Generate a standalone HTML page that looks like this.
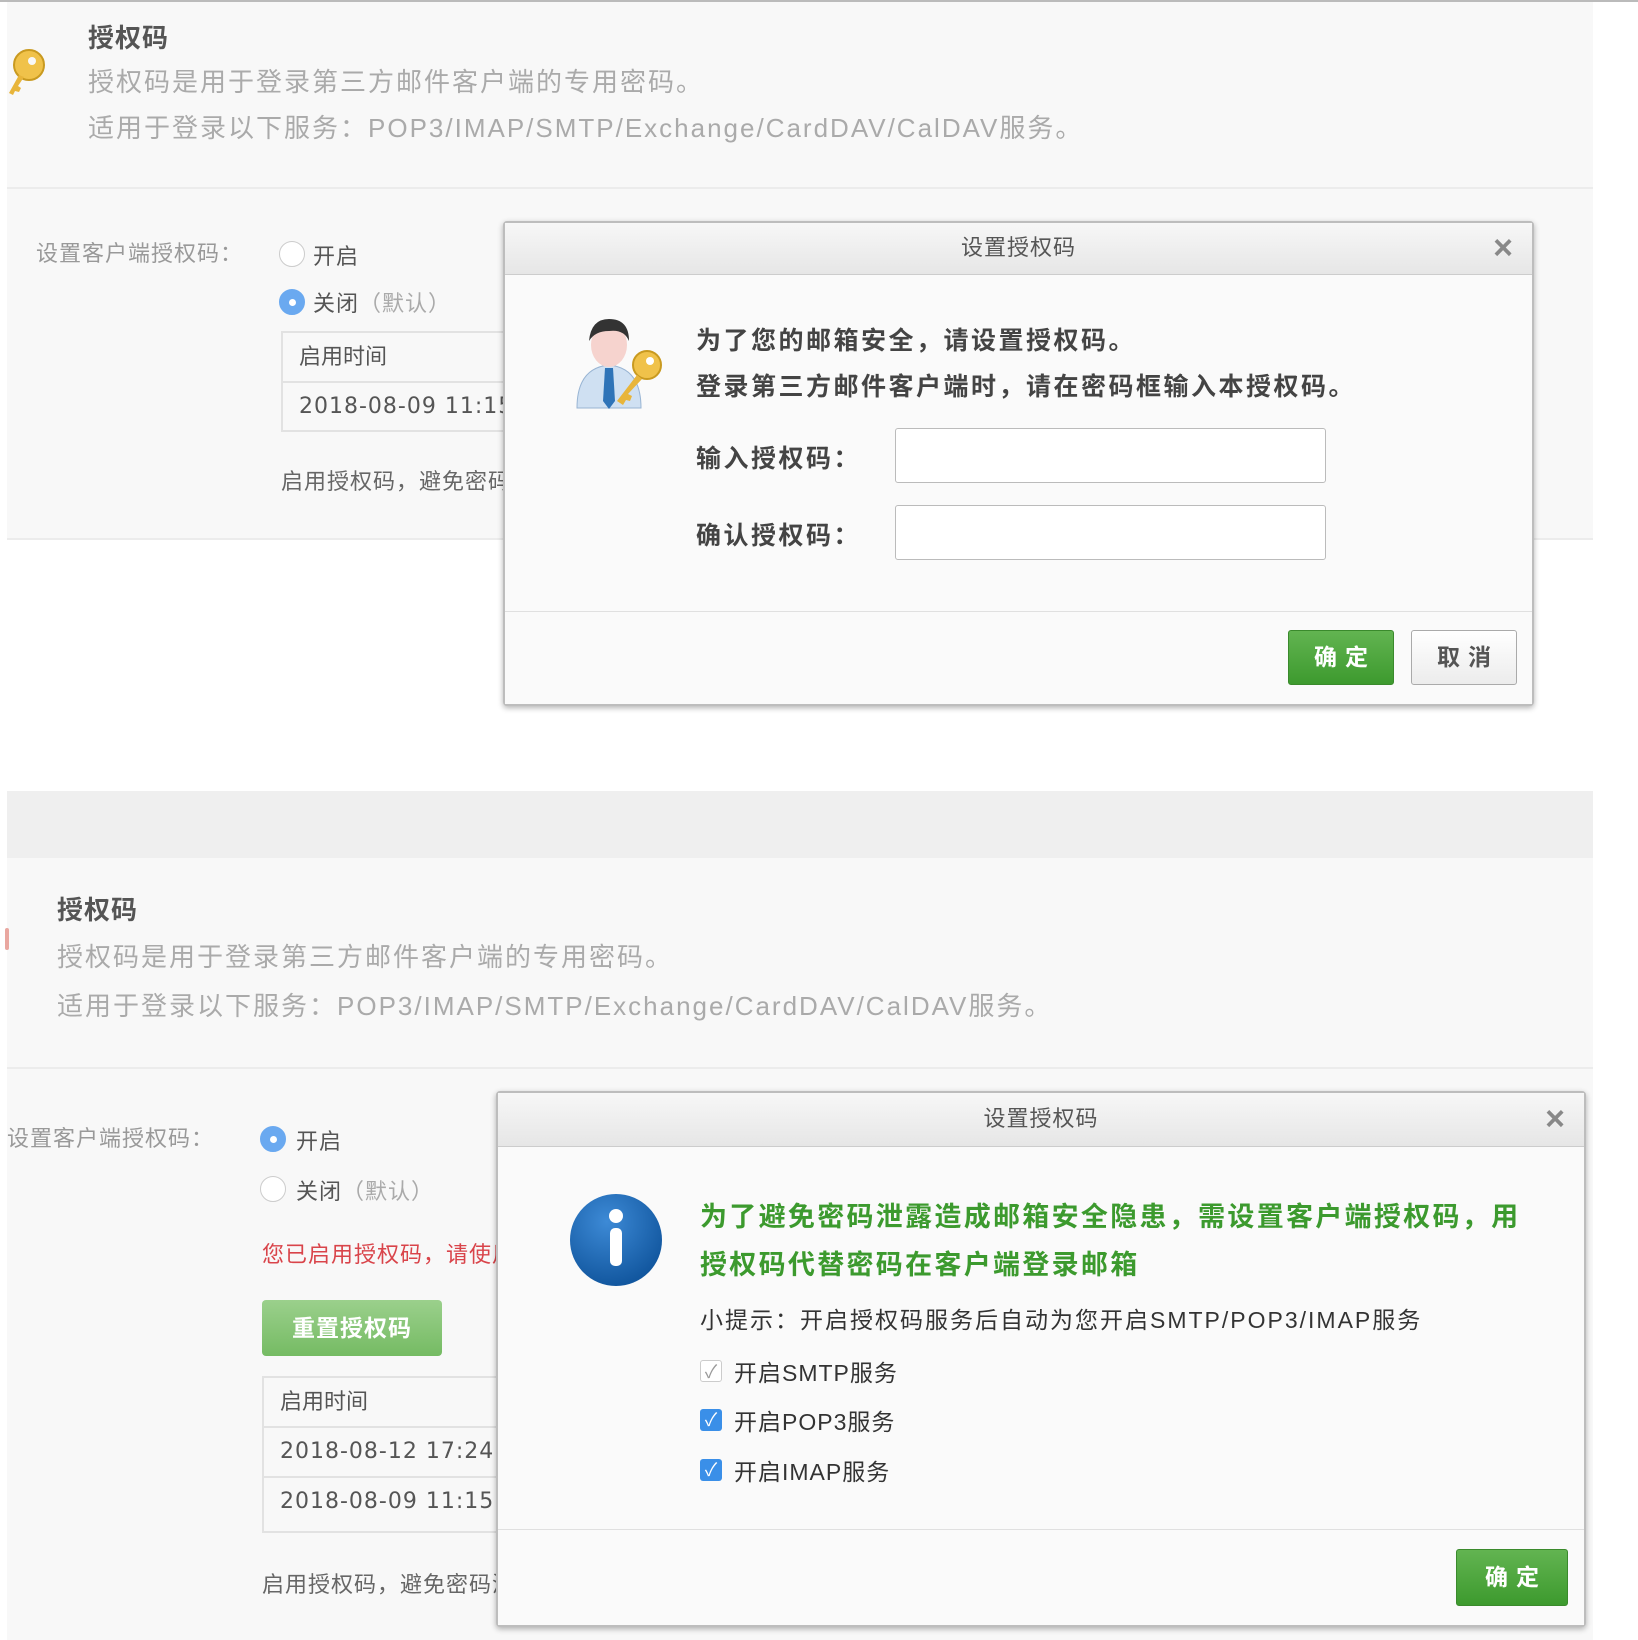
<!DOCTYPE html>
<html><head><meta charset="utf-8"><style>
*{margin:0;padding:0;box-sizing:border-box}
body{width:1638px;height:1640px;position:relative;background:#fff;overflow:hidden;font-family:"Liberation Sans","Noto Sans CJK SC",sans-serif;}
.a{position:absolute;white-space:nowrap}
.bg{position:absolute;left:7px;width:1586px;background:#f8f8f8}
.sep{position:absolute;left:7px;width:1586px;height:2px;background:#ececec}
.t{font-size:26px;font-weight:bold;color:#555;letter-spacing:1px}
.g{font-size:26px;color:#aaa;letter-spacing:2px}
.lbl{font-size:22px;color:#999;letter-spacing:1px}
.rad{position:absolute;width:26px;height:26px;border-radius:50%;border:1px solid #ccc;background:#fff}
.rad.on{background:#6aa9f0;border-color:#6aa9f0}
.rad.on:after{content:"";position:absolute;left:9px;top:9px;width:7px;height:7px;border-radius:50%;background:#fff}
.opt{font-size:22px;color:#555;letter-spacing:1px}
.tbl{position:absolute;border:2px solid #e2e2e2;background:#f8f8f8}
.tbl div{height:50px;border-bottom:2px solid #e2e2e2;padding-left:16px;line-height:48px;font-size:22px;color:#555;white-space:nowrap;overflow:hidden}
.tbl div.d{font-family:"DejaVu Sans",sans-serif;font-size:22px;letter-spacing:1px}
.tbl div:last-child{border-bottom:none}
.dlg{position:absolute;background:#fafafa;border:2px solid #bdbdbd;border-radius:4px;box-shadow:0 2px 6px rgba(0,0,0,.3)}
.hd{position:absolute;left:0;top:0;right:0;background:linear-gradient(#f7f7f7,#e6e6e6);border-bottom:1px solid #ccc;text-align:center;font-size:22px;color:#555;letter-spacing:1px}
.x{position:absolute;right:18px;font-size:34px;color:#888;font-weight:bold}
.ft{position:absolute;left:0;right:0;bottom:0;border-top:1px solid #e0e0e0;background:#fafafa}
.btn{position:absolute;border-radius:3px;text-align:center;font-size:23px;font-weight:bold;letter-spacing:8px;padding-left:8px}
.ok{background:linear-gradient(#62b451,#3d9a2e);color:#fff;border:1px solid #3a8a2c}
.cn{background:linear-gradient(#fff,#ececec);color:#555;border:1px solid #aaa}
.inp{position:absolute;background:#fff;border:1px solid #bbb;border-radius:3px}
.b{font-size:25px;font-weight:bold;color:#444;letter-spacing:2.5px}
.cb{position:absolute;width:22px;height:22px;border-radius:3px;color:#fff;font-size:18px;line-height:22px;text-align:center}
.ck{font-size:23px;color:#333;letter-spacing:1px}
</style></head><body>
<div class="a" style="left:0;top:0;width:1638px;height:2px;background:#bbb"></div>
<div class="bg" style="top:2px;height:537px"></div>
<div class="sep" style="top:187px"></div>
<div class="sep" style="top:538px"></div>
<svg class="a" style="left:5px;top:45px" width="42" height="55" viewBox="0 0 42 55"><circle cx="24" cy="20" r="15" fill="#f0c24a" stroke="#c99a20" stroke-width="2"/><circle cx="27" cy="16" r="4" fill="#f8f8f8"/><path d="M14 30 L4 48 L8 50 L10 46 L14 47 L16 43 L13 41 L19 32Z" fill="#e8b53a"/></svg>
<div class="a t" style="left:88px;top:18px">授权码</div>
<div class="a g" style="left:88px;top:62px">授权码是用于登录第三方邮件客户端的专用密码。</div>
<div class="a g" style="left:88px;top:108px">适用于登录以下服务：POP3/IMAP/SMTP/Exchange/CardDAV/CalDAV服务。</div>
<div class="a lbl" style="left:36px;top:236px">设置客户端授权码：</div>
<div class="rad" style="left:279px;top:241px"></div>
<div class="a opt" style="left:313px;top:239px">开启</div>
<div class="rad on" style="left:279px;top:289px"></div>
<div class="a opt" style="left:313px;top:286px">关闭<span style="color:#aaa">（默认）</span></div>
<div class="tbl" style="left:281px;top:331px;width:260px;height:101px"><div>启用时间</div><div class="d">2018-08-09 11:15</div></div>
<div class="a" style="left:281px;top:464px;font-size:22px;color:#666;letter-spacing:1px">启用授权码，避免密码泄露</div>

<div class="a" style="left:7px;top:791px;width:1586px;height:67px;background:#efefef"></div>
<div class="bg" style="top:858px;height:782px"></div>
<div class="sep" style="top:1067px"></div>
<div class="a" style="left:5px;top:928px;width:4px;height:22px;background:#e9a7a0;border-radius:2px"></div>
<div class="a t" style="left:57px;top:890px">授权码</div>
<div class="a g" style="left:57px;top:937px">授权码是用于登录第三方邮件客户端的专用密码。</div>
<div class="a g" style="left:57px;top:986px">适用于登录以下服务：POP3/IMAP/SMTP/Exchange/CardDAV/CalDAV服务。</div>
<div class="a lbl" style="left:7px;top:1121px">设置客户端授权码：</div>
<div class="rad on" style="left:260px;top:1126px"></div>
<div class="a opt" style="left:296px;top:1124px">开启</div>
<div class="rad" style="left:260px;top:1176px"></div>
<div class="a opt" style="left:296px;top:1174px">关闭<span style="color:#aaa">（默认）</span></div>
<div class="a" style="left:262px;top:1237px;font-size:22px;color:#d9444a;letter-spacing:1px">您已启用授权码，请使用</div>
<div class="a" style="left:262px;top:1300px;width:180px;height:56px;border-radius:4px;background:linear-gradient(#9bd08c,#75bb63);color:#fff;font-size:23px;font-weight:bold;text-align:center;line-height:56px;letter-spacing:1px">重置授权码</div>
<div class="tbl" style="left:262px;top:1376px;width:260px;height:157px"><div>启用时间</div><div class="d">2018-08-12 17:24</div><div class="d">2018-08-09 11:15</div></div>
<div class="a" style="left:262px;top:1567px;font-size:22px;color:#666;letter-spacing:1px">启用授权码，避免密码泄露</div>

<div class="dlg" style="left:503px;top:221px;width:1031px;height:485px">
 <div class="hd" style="height:52px;line-height:50px">设置授权码<span class="x" style="top:0">×</span></div>
 <svg class="a" style="left:64px;top:90px" width="95" height="100" viewBox="0 0 95 100"><path d="M8 95 Q8 55 40 52 Q72 55 72 95Z" fill="#cfe0f2" stroke="#98b4d3"/><path d="M36 55 L44 55 L46 88 L40 96 L34 88Z" fill="#2f74b8"/><ellipse cx="40" cy="32" rx="18" ry="22" fill="#f6d3ce"/><path d="M20 28 Q22 6 40 6 Q60 6 60 28 Q55 16 40 18 Q26 18 20 28Z" fill="#333"/><circle cx="78" cy="52" r="14" fill="#f0c24a" stroke="#c99a20" stroke-width="2"/><circle cx="81" cy="48" r="4" fill="#fff"/><path d="M68 62 L48 88 L54 92 L57 87 L61 88 L63 83 L59 81 L73 66Z" fill="#e8b53a"/></svg>
 <div class="a b" style="left:191px;top:98px">为了您的邮箱安全，请设置授权码。</div>
 <div class="a b" style="left:191px;top:144px">登录第三方邮件客户端时，请在密码框输入本授权码。</div>
 <div class="a b" style="left:191px;top:216px">输入授权码：</div>
 <div class="a b" style="left:191px;top:293px">确认授权码：</div>
 <div class="inp" style="left:390px;top:205px;width:431px;height:55px"></div>
 <div class="inp" style="left:390px;top:282px;width:431px;height:55px"></div>
 <div class="ft" style="height:93px"></div>
 <div class="btn ok" style="left:783px;top:407px;width:106px;height:55px;line-height:53px">确定</div>
 <div class="btn cn" style="left:906px;top:407px;width:106px;height:55px;line-height:53px">取消</div>
</div>

<div class="dlg" style="left:496px;top:1091px;width:1090px;height:536px">
 <div class="hd" style="height:54px;line-height:52px">设置授权码<span class="x" style="top:0">×</span></div>
 <svg class="a" style="left:70px;top:99px" width="96" height="96" viewBox="0 0 96 96"><defs><radialGradient id="r" cx="40%" cy="30%" r="70%"><stop offset="0" stop-color="#3d8ad6"/><stop offset="1" stop-color="#12579f"/></radialGradient></defs><circle cx="48" cy="48" r="46" fill="url(#r)"/><circle cx="48" cy="24" r="7" fill="#fff"/><rect x="42" y="36" width="12" height="38" rx="5" fill="#fff"/></svg>
 <div class="a" style="left:202px;top:102px;font-size:27px;font-weight:bold;color:#3c9a2e;letter-spacing:2.3px">为了避免密码泄露造成邮箱安全隐患，需设置客户端授权码，用</div>
 <div class="a" style="left:202px;top:150px;font-size:27px;font-weight:bold;color:#3c9a2e;letter-spacing:2.3px">授权码代替密码在客户端登录邮箱</div>
 <div class="a" style="left:202px;top:208px;font-size:23px;color:#333;letter-spacing:2px">小提示：开启授权码服务后自动为您开启SMTP/POP3/IMAP服务</div>
 <div class="cb" style="left:202px;top:267px;border:1px solid #ccc;background:#fff;color:#999">✓</div>
 <div class="a ck" style="left:236px;top:261px">开启SMTP服务</div>
 <div class="cb" style="left:202px;top:316px;background:#3a8fe8">✓</div>
 <div class="a ck" style="left:236px;top:310px">开启POP3服务</div>
 <div class="cb" style="left:202px;top:366px;background:#3a8fe8">✓</div>
 <div class="a ck" style="left:236px;top:360px">开启IMAP服务</div>
 <div class="ft" style="height:96px"></div>
 <div class="btn ok" style="left:958px;top:456px;width:112px;height:57px;line-height:55px">确定</div>
</div>
</body></html>
